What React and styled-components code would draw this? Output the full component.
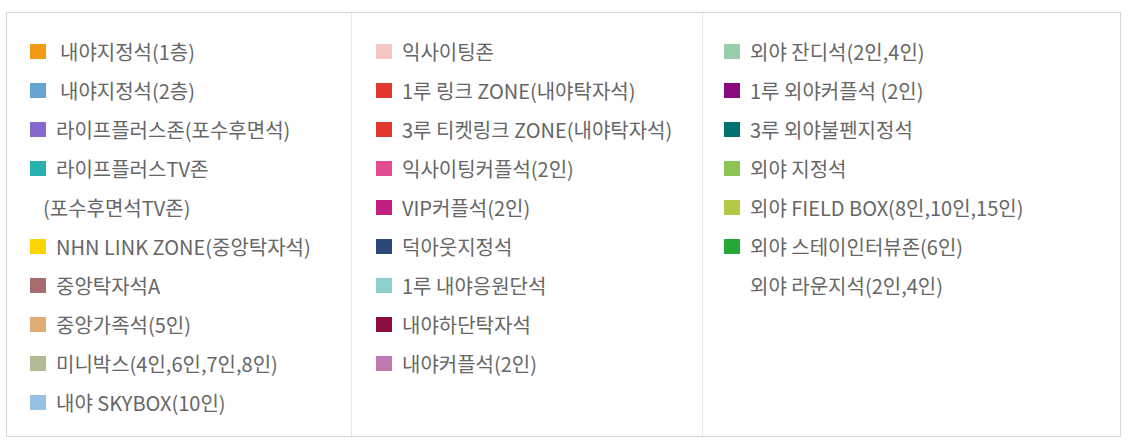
import React from "react";
import styled, { createGlobalStyle } from "styled-components";

const Global = createGlobalStyle`
  html, body { margin: 0; padding: 0; background: #fff; }
  body { font-family: "Noto Sans CJK KR", "Noto Sans", sans-serif; }
`;

const Legend = styled.div`
  box-sizing: border-box;
  margin: 12px 8px 0 6px;
  height: 425px;
  border: 1px solid #d6d6d6;
  display: grid;
  grid-template-columns: 344px 351px 1fr;
`;

const Column = styled.ul`
  list-style: none;
  margin: 0;
  padding: 19px 0 0 ${(p) => p.$pad}px;
  border-left: ${(p) => (p.$first ? "none" : "1px solid #e6e6e6")};
  display: flex;
  flex-direction: column;
`;

const Item = styled.li`
  display: flex;
  align-items: center;
  gap: 10px;
  height: 39px;
  font-size: 20px;
  letter-spacing: 0;
  color: #666;
  white-space: nowrap;
`;

const Swatch = styled.span`
  flex: none;
  width: 16px;
  height: 15px;
  background: ${(p) => p.$color || "transparent"};
`;

const Label = styled.span`
  padding-left: ${(p) => (p.$indent ? 4 : 0)}px;
`;

const Continuation = styled.li`
  display: flex;
  align-items: center;
  height: 39px;
  padding-left: 13px;
  font-size: 20px;
  color: #666;
  white-space: nowrap;
`;

const columns = [
  {
    pad: 23,
    items: [
      { c: "#f39a14", t: "내야지정석(1층)", indent: true },
      { c: "#68a4d2", t: "내야지정석(2층)", indent: true },
      { c: "#8868cc", t: "라이프플러스존(포수후면석)" },
      { c: "#2bb1ad", t: "라이프플러스TV존", cont: "(포수후면석TV존)" },
      { c: "#fad400", t: "NHN LINK ZONE(중앙탁자석)" },
      { c: "#a56d6d", t: "중앙탁자석A" },
      { c: "#dfad74", t: "중앙가족석(5인)" },
      { c: "#b1bc95", t: "미니박스(4인,6인,7인,8인)" },
      { c: "#95c1e4", t: "내야 SKYBOX(10인)" },
    ],
  },
  {
    pad: 24,
    items: [
      { c: "#f4c6c6", t: "익사이팅존" },
      { c: "#e3362f", t: "1루 링크 ZONE(내야탁자석)" },
      { c: "#e3362f", t: "3루 티켓링크 ZONE(내야탁자석)" },
      { c: "#e54d92", t: "익사이팅커플석(2인)" },
      { c: "#c0207f", t: "VIP커플석(2인)" },
      { c: "#2c4878", t: "덕아웃지정석" },
      { c: "#8ccfcc", t: "1루 내야응원단석" },
      { c: "#8c0c3d", t: "내야하단탁자석" },
      { c: "#be7aae", t: "내야커플석(2인)" },
    ],
  },
  {
    pad: 21,
    items: [
      { c: "#98cfab", t: "외야 잔디석(2인,4인)" },
      { c: "#8b0a7f", t: "1루 외야커플석 (2인)" },
      { c: "#007370", t: "3루 외야불펜지정석" },
      { c: "#8bc455", t: "외야 지정석" },
      { c: "#b5c843", t: "외야 FIELD BOX(8인,10인,15인)" },
      { c: "#22a93a", t: "외야 스테이인터뷰존(6인)" },
      { c: null, t: "외야 라운지석(2인,4인)" },
    ],
  },
];

export default function App() {
  return (
    <>
      <Global />
      <Legend>
        {columns.map((col, ci) => (
          <Column key={ci} $pad={col.pad} $first={ci === 0}>
            {col.items.map((it, i) => (
              <React.Fragment key={i}>
                <Item>
                  <Swatch $color={it.c} />
                  <Label $indent={it.indent}>{it.t}</Label>
                </Item>
                {it.cont && <Continuation>{it.cont}</Continuation>}
              </React.Fragment>
            ))}
          </Column>
        ))}
      </Legend>
    </>
  );
}
